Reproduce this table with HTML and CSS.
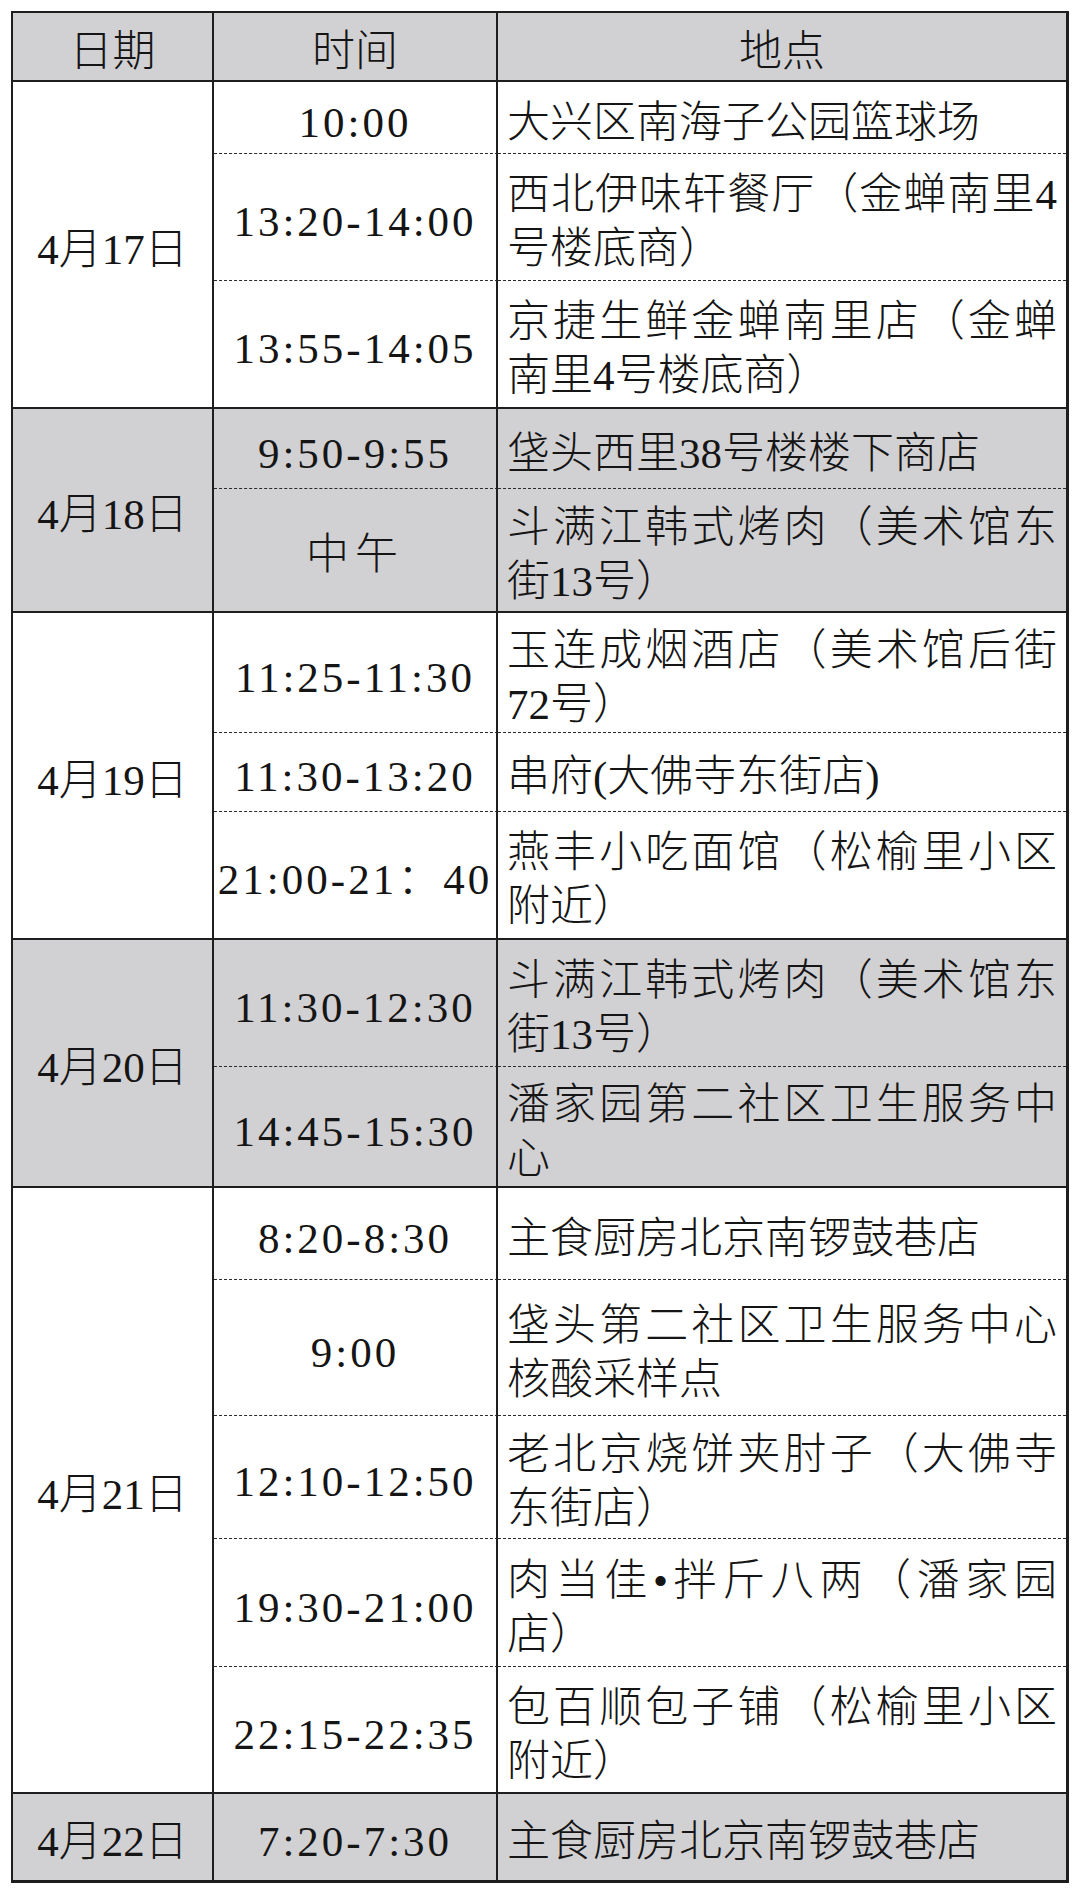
FILE: index.html
```html
<!DOCTYPE html>
<html lang="zh-CN">
<head>
<meta charset="utf-8">
<title>行程表</title>
<link rel="stylesheet" href="styles.css">
</head>
<body>
<div class="sheet">
  <div class="cell hd date-col">日期</div>
  <div class="cell hd time-col">时间</div>
  <div class="cell hd place-col">地点</div>

  <div class="cell date span3">4月17日</div>
  <div class="cell time">10:00</div>
  <div class="cell place">大兴区南海子公园篮球场</div>
  <div class="cell time">13:20-14:00</div>
  <div class="cell place">西北伊味轩餐厅（金蝉南里4号楼底商）</div>
  <div class="cell time end">13:55-14:05</div>
  <div class="cell place end">京捷生鲜金蝉南里店（金蝉南里4号楼底商）</div>

  <div class="cell date shade span2">4月18日</div>
  <div class="cell time shade">9:50-9:55</div>
  <div class="cell place shade">垡头西里38号楼楼下商店</div>
  <div class="cell time shade end noon">中午</div>
  <div class="cell place shade end">斗满江韩式烤肉（美术馆东街13号）</div>

  <div class="cell date span3">4月19日</div>
  <div class="cell time">11:25-11:30</div>
  <div class="cell place">玉连成烟酒店（美术馆后街72号）</div>
  <div class="cell time">11:30-13:20</div>
  <div class="cell place">串府(大佛寺东街店)</div>
  <div class="cell time end">21:00-21：40</div>
  <div class="cell place end">燕丰小吃面馆（松榆里小区附近）</div>

  <div class="cell date shade span2">4月20日</div>
  <div class="cell time shade">11:30-12:30</div>
  <div class="cell place shade">斗满江韩式烤肉（美术馆东街13号）</div>
  <div class="cell time shade end">14:45-15:30</div>
  <div class="cell place shade end">潘家园第二社区卫生服务中心</div>

  <div class="cell date span5">4月21日</div>
  <div class="cell time">8:20-8:30</div>
  <div class="cell place">主食厨房北京南锣鼓巷店</div>
  <div class="cell time">9:00</div>
  <div class="cell place">垡头第二社区卫生服务中心核酸采样点</div>
  <div class="cell time">12:10-12:50</div>
  <div class="cell place">老北京烧饼夹肘子（大佛寺东街店）</div>
  <div class="cell time">19:30-21:00</div>
  <div class="cell place">肉当佳•拌斤八两（潘家园店）</div>
  <div class="cell time end">22:15-22:35</div>
  <div class="cell place end">包百顺包子铺（松榆里小区附近）</div>

  <div class="cell date shade last">4月22日</div>
  <div class="cell time shade last">7:20-7:30</div>
  <div class="cell place shade last">主食厨房北京南锣鼓巷店</div>
</div>
</body>
</html>
```

FILE: styles.css
```css
* {
  box-sizing: border-box;
}

html, body {
  margin: 0;
  padding: 0;
  background: #ffffff;
}

body {
  font-family: "Liberation Serif", "Noto Sans CJK SC", serif;
  font-weight: 300;
  color: #151515;
}

.sheet {
  margin: 11px 0 0 11px;
  width: 1058px;
  display: grid;
  grid-template-columns: 201px 284px 568px;
  grid-template-rows: 69px 72px 127px 128px 80px 124px 120px 79px 128px 127px 121px 92px 136px 123px 128px 127px 86px;
  border-left: 2px solid #1e1e1e;
  border-top: 2px solid #1e1e1e;
  border-right: 3px solid #1e1e1e;
  border-bottom: 3px solid #1e1e1e;
}

.cell {
  font-size: 43px;
  line-height: 54px;
  display: flex;
  align-items: center;
  padding-top: 10px;
  border-right: 2px solid #1e1e1e;
  border-bottom: 2px solid #1e1e1e;
  background: #ffffff;
}

.hd {
  background: #d1d0d3;
  justify-content: center;
}

.place-col,
.place {
  border-right: none;
}

.date {
  grid-column: 1;
  justify-content: center;
}

.span2 { grid-row: span 2; }
.span3 { grid-row: span 3; }
.span5 { grid-row: span 5; }

.time {
  grid-column: 2;
  justify-content: center;
  letter-spacing: 3px;
  border-bottom: 1px dashed #2a2a2a;
}

.noon {
  letter-spacing: 6px;
}

.place {
  grid-column: 3;
  padding-left: 9px;
  padding-right: 9px;
  text-align: justify;
  border-bottom: 1px dashed #2a2a2a;
}

.time.end,
.place.end {
  border-bottom: 2px solid #1e1e1e;
}

.last,
.time.last,
.place.last {
  border-bottom: none;
}

.shade {
  background: #d1d0d3;
}
```
